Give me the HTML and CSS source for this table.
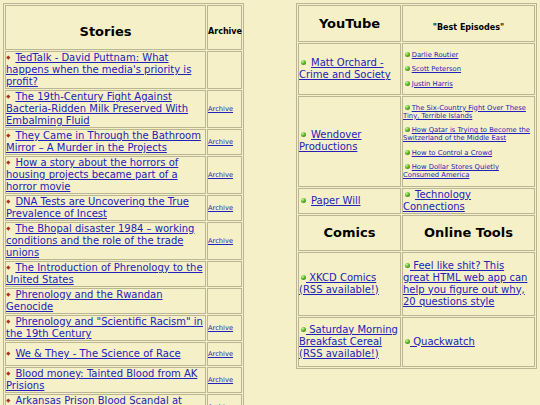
FILE: index.html
```html
<!DOCTYPE html>
<html>
<head>
<meta charset="utf-8">
<title>Links</title>
<link rel="stylesheet" href="styles.css">
</head>
<body>
<div class="page">
  <table class="grid stories">
    <tr class="head">
      <th class="h-big w-story">Stories</th>
      <th class="h-arch w-arch">Archive</th>
    </tr>
    <tr><td><span class="dia"></span><a href="#">TedTalk - David Puttnam: What happens when the media's priority is profit?</a></td><td class="arch"></td></tr>
    <tr><td><span class="dia"></span><a href="#">The 19th-Century Fight Against Bacteria-Ridden Milk Preserved With Embalming Fluid</a></td><td class="arch"><a href="#">Archive</a></td></tr>
    <tr><td><span class="dia"></span><a href="#">They Came in Through the Bathroom Mirror – A Murder in the Projects</a></td><td class="arch"><a href="#">Archive</a></td></tr>
    <tr><td><span class="dia"></span><a href="#">How a story about the horrors of housing projects became part of a horror movie</a></td><td class="arch"><a href="#">Archive</a></td></tr>
    <tr><td><span class="dia"></span><a href="#">DNA Tests are Uncovering the True Prevalence of Incest</a></td><td class="arch"><a href="#">Archive</a></td></tr>
    <tr><td><span class="dia"></span><a href="#">The Bhopal disaster 1984 – working conditions and the role of the trade unions</a></td><td class="arch"><a href="#">Archive</a></td></tr>
    <tr><td><span class="dia"></span><a href="#">The Introduction of Phrenology to the United States</a></td><td class="arch"></td></tr>
    <tr><td><span class="dia"></span><a href="#">Phrenology and the Rwandan Genocide</a></td><td class="arch"></td></tr>
    <tr><td><span class="dia"></span><a href="#">Phrenology and "Scientific Racism" in the 19th Century</a></td><td class="arch"><a href="#">Archive</a></td></tr>
    <tr class="tall1"><td><span class="dia"></span><a href="#">We &amp; They - The Science of Race</a></td><td class="arch"><a href="#">Archive</a></td></tr>
    <tr><td><span class="dia"></span><a href="#">Blood money: Tainted Blood from AK Prisions</a></td><td class="arch"><a href="#">Archive</a></td></tr>
    <tr><td><span class="dia"></span><a href="#">Arkansas Prison Blood Scandal at Cummins Unit</a></td><td class="arch"><a href="#">Archive</a></td></tr>
  </table>

  <table class="grid media">
    <tr class="head-r">
      <th class="h-big w-left">YouTube</th>
      <th class="h-eps w-right">"Best Episodes"</th>
    </tr>
    <tr>
      <td><span class="ball big"></span><a href="#">Matt Orchard - Crime and Society</a></td>
      <td class="eps">
        <p><span class="ball"></span> <a href="#">Darlie Routier</a></p>
        <p><span class="ball"></span> <a href="#">Scott Peterson</a></p>
        <p><span class="ball"></span> <a href="#">Justin Harris</a></p>
      </td>
    </tr>
    <tr>
      <td class="bigger"><span class="ball big"></span><a href="#">Wendover Productions</a></td>
      <td class="eps">
        <p><span class="ball"></span> <a href="#">The Six-Country Fight Over These Tiny, Terrible Islands</a></p>
        <p><span class="ball"></span> <a href="#">How Qatar is Trying to Become the Switzerland of the Middle East</a></p>
        <p><span class="ball"></span> <a href="#">How to Control a Crowd</a></p>
        <p><span class="ball"></span> <a href="#">How Dollar Stores Quietly<br>Consumed America</a></p>
      </td>
    </tr>
    <tr>
      <td><span class="ball big"></span><a href="#">Paper Will</a></td>
      <td><span class="ball big"></span><a href="#">Technology Connections</a></td>
    </tr>
    <tr class="head-s">
      <th class="h-big">Comics</th>
      <th class="h-big">Online Tools</th>
    </tr>
    <tr class="row-xkcd">
      <td><span class="ball big tight"></span><a href="#">&nbsp;XKCD Comics (RSS available!)</a></td>
      <td><span class="ball big tight"></span><a href="#">&nbsp;Feel like shit? This<br>great HTML web app can<br>help you figure out why,<br>20 questions style</a></td>
    </tr>
    <tr class="row-smbc">
      <td><span class="ball big tight"></span><a href="#">&nbsp;Saturday Morning Breakfast Cereal (RSS available!)</a></td>
      <td><span class="ball big tight"></span><a href="#">&nbsp;Quackwatch</a></td>
    </tr>
  </table>
</div>
</body>
</html>
```

FILE: styles.css
```css
html, body {
  margin: 0;
  background: #f6f0c9;
}

body {
  padding: 3px;
  font-family: "DejaVu Sans", Verdana, sans-serif;
  font-size: 10px;
  line-height: 12px;
  color: #000;
}

.page {
  display: flex;
  justify-content: space-between;
  align-items: flex-start;
}

a {
  color: #2222b8;
  text-decoration: underline;
}

.grid {
  border: 1px solid #bab593;
  border-spacing: 1px;
  table-layout: fixed;
  width: 241px;
}

.grid td,
.grid th {
  box-sizing: border-box;
  border: 1px solid #bab593;
  padding: 0;
  vertical-align: middle;
  text-align: left;
}

.w-story { width: 201px; }
.w-arch { width: 35px; }
.w-left { width: 103px; }
.w-right { width: 133px; }

.grid th {
  font-weight: bold;
}

.grid .h-big {
  font-size: 13px;
  line-height: 15px;
  text-align: center;
}

.head th {
  height: 45px;
  padding-top: 8px;
}

.grid .h-arch {
  font-size: 8px;
  line-height: 10px;
  text-align: left;
}

.head-r th {
  height: 37px;
}

.grid .h-eps {
  font-size: 8px;
  line-height: 10px;
  text-align: center;
  padding-top: 8px;
}

.head-s th {
  height: 36px;
}

.arch {
  font-size: 6.7px;
  line-height: 8px;
}

.tall1 td {
  height: 24px;
}

.dia {
  display: inline-block;
  width: 2.6px;
  height: 2.6px;
  background: #a8341a;
  transform: rotate(45deg);
  margin: 0 6px 0 0.8px;
  vertical-align: 2px;
}

.ball {
  display: inline-block;
  width: 5px;
  height: 5px;
  border-radius: 50%;
  background: radial-gradient(circle at 35% 30%, #c8f59a 0, #5cb82e 45%, #2e6b12 100%);
  vertical-align: 0;
  margin-left: 1.5px;
}

.ball.big {
  margin: 0 5px 0 2px;
  vertical-align: 1px;
}

.ball.big.tight {
  margin-right: 0;
}

.eps p {
  margin: 6.5px 0;
  font-size: 6.8px;
  line-height: 8px;
}

.row-xkcd td {
  height: 64px;
}

.row-smbc td {
  height: 50px;
}
```
